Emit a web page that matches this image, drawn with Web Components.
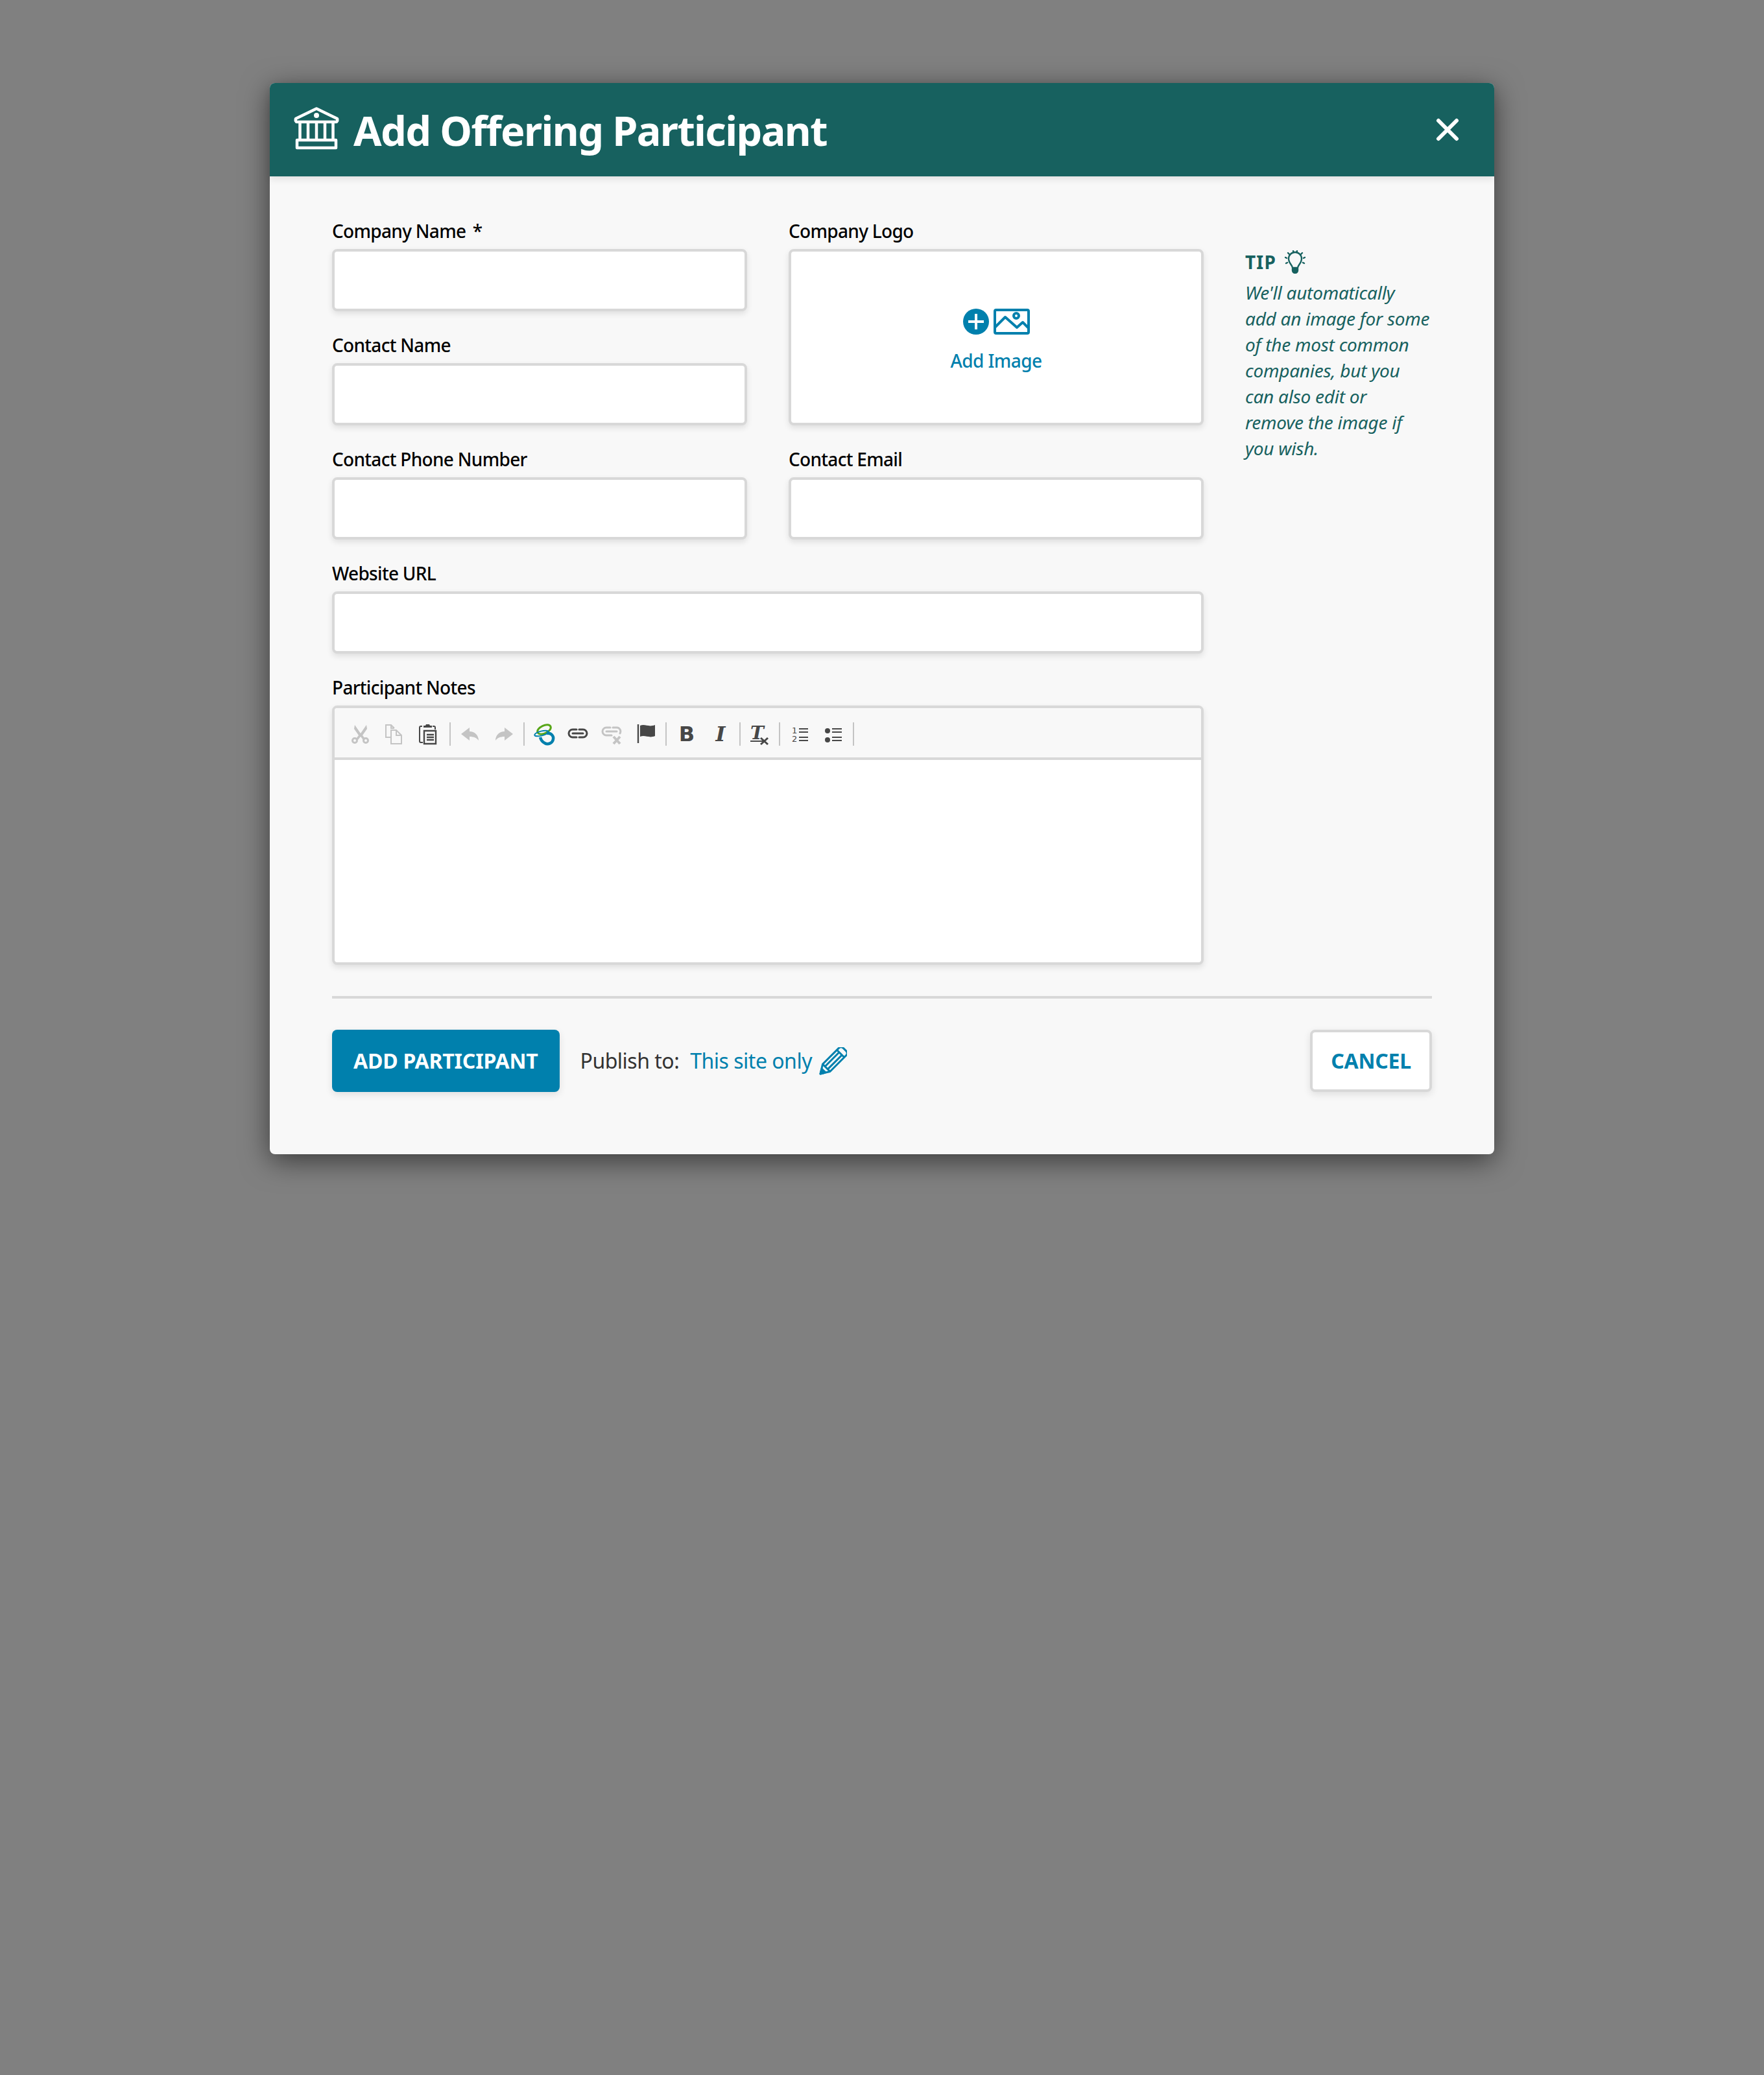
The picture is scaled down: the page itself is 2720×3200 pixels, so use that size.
<!DOCTYPE html>
<html lang="en">
<head>
<meta charset="utf-8">
<title>Add Offering Participant</title>
<style>
    html, body { margin: 0; padding: 0; }
    body {
        background: #808080;
        min-height: 3200px;
        font-family: "Noto Sans", "Liberation Sans", sans-serif;
        padding-top: 128px;
        box-sizing: border-box;
    }
</style>
</head>
<body>

<participant-modal heading="Add Offering Participant">
    <form-grid>
        <form-field label="Company Name&nbsp;&#8201;*"><text-box></text-box></form-field>
        <form-field label="Company Logo" style="grid-row: span 2"><logo-upload></logo-upload></form-field>
        <form-field label="Contact Name"><text-box></text-box></form-field>
        <form-field label="Contact Phone Number"><text-box></text-box></form-field>
        <form-field label="Contact Email"><text-box></text-box></form-field>
        <form-field label="Website URL" style="grid-column: span 2"><text-box></text-box></form-field>
        <form-field label="Participant Notes" style="grid-column: span 2"><notes-editor></notes-editor></form-field>
    </form-grid>
    <tip-note slot="aside">We'll automatically<br>add an image for some<br>of the most common<br>companies, but you<br>can also edit or<br>remove the image if<br>you wish.</tip-note>
    <action-button slot="primary" kind="primary">ADD PARTICIPANT</action-button>
    <publish-target slot="primary"></publish-target>
    <action-button slot="secondary">CANCEL</action-button>
</participant-modal>

<script>
const FONT = `"Noto Sans", "Liberation Sans", sans-serif`

// ----------------------------------------------------------------------------
// MARK: Modal
// ----------------------------------------------------------------------------

class ParticipantModal extends HTMLElement {
    constructor() {
        super()
        this.attachShadow({ mode: 'open' })
        this.shadowRoot.innerHTML = `
            <style>
                :host {
                    display: block;
                    width: 1888px;
                    margin-left: 416px;
                    border-radius: 8px;
                    background: #f8f8f8;
                    box-shadow: 0 10px 44px rgba(0, 0, 0, 0.55);
                }
                header {
                    display: flex;
                    align-items: center;
                    height: 144px;
                    padding: 0 54px 0 37px;
                    box-sizing: border-box;
                    background: #17615f;
                    border-radius: 8px 8px 0 0;
                    box-shadow: 0 4px 12px rgba(0, 0, 0, 0.1);
                    color: #fff;
                    position: relative;
                }
                .logo { margin-top: -5px; }
                h1 {
                    flex: 1;
                    margin: 0 0 0 22px;
                    font: 700 63px/1 ${FONT};
                    letter-spacing: -1.6px;
                }
                main {
                    display: grid;
                    grid-template-columns: 1344px 288px;
                    column-gap: 64px;
                    padding: 64px 96px 0;
                }
                footer {
                    display: flex;
                    justify-content: space-between;
                    align-items: center;
                    margin: 48px 96px 0;
                    padding: 48px 0 96px;
                    border-top: 4px solid #d8d8d8;
                }
                .left { display: flex; align-items: center; gap: 32px; }
            </style>
            <header>
                <svg class="logo" width="70" height="66" viewBox="0 0 70 66" fill="none" stroke="#fff" stroke-width="4.5" stroke-linejoin="round" stroke-linecap="round">
                    <path d="M35 2.5 L67 18 Q68 23 65 23 H5 Q2 23 3 18 Z"/>
                    <circle cx="35" cy="13" r="4" fill="#fff" stroke="none"/>
                    <path d="M9.5 25 V50 M22 25 V50 M35 25 V50 M48 25 V50 M60.5 25 V50"/>
                    <rect x="5" y="51" width="60" height="12"/>
                </svg>
                <h1>${this.getAttribute('heading')}</h1>
                <svg width="36" height="36" viewBox="0 0 36 36" stroke="#fff" stroke-width="6" stroke-linecap="round">
                    <path d="M4 4 L32 32 M32 4 L4 32"/>
                </svg>
            </header>
            <main>
                <slot></slot>
                <slot name="aside"></slot>
            </main>
            <footer>
                <div class="left"><slot name="primary"></slot></div>
                <slot name="secondary"></slot>
            </footer>
        `
    }
}

customElements.define('participant-modal', ParticipantModal)

// ----------------------------------------------------------------------------
// MARK: Form
// ----------------------------------------------------------------------------

class FormGrid extends HTMLElement {
    constructor() {
        super()
        this.attachShadow({ mode: 'open' })
        this.shadowRoot.innerHTML = `
            <style>
                :host {
                    display: grid;
                    grid-template-columns: 640px 640px;
                    column-gap: 64px;
                    row-gap: 32px;
                }
            </style>
            <slot></slot>
        `
    }
}

customElements.define('form-grid', FormGrid)

class FormField extends HTMLElement {
    constructor() {
        super()
        this.attachShadow({ mode: 'open' })
        this.shadowRoot.innerHTML = `
            <style>
                :host {
                    display: flex;
                    flex-direction: column;
                    min-width: 0;
                }
                label {
                    display: block;
                    height: 48px;
                    font: 500 28px/40px ${FONT};
                    color: #000;
                    letter-spacing: -0.7px;
                    white-space: nowrap;
                }
                .control { flex: 1; display: flex; flex-direction: column; }
            </style>
            <label>${this.getAttribute('label')}</label>
            <div class="control"><slot></slot></div>
        `
    }
}

customElements.define('form-field', FormField)

const boxStyles = `
    background: #fff;
    border: 4px solid #d8d8d8;
    border-radius: 8px;
    box-sizing: border-box;
    box-shadow: 0 4px 10px rgba(0, 0, 0, 0.1);
`

class TextBox extends HTMLElement {
    constructor() {
        super()
        this.attachShadow({ mode: 'open' })
        this.shadowRoot.innerHTML = `
            <style>
                :host { display: block; height: 96px; ${boxStyles} }
            </style>
        `
    }
}

customElements.define('text-box', TextBox)

class LogoUpload extends HTMLElement {
    constructor() {
        super()
        this.attachShadow({ mode: 'open' })
        this.shadowRoot.innerHTML = `
            <style>
                :host {
                    flex: 1;
                    display: flex;
                    flex-direction: column;
                    align-items: center;
                    padding-top: 84px;
                    color: #0080ad;
                    font: 500 28px/40px ${FONT};
                    letter-spacing: -0.6px;
                    ${boxStyles}
                }
                .icons { display: flex; align-items: center; gap: 6px; height: 48px; margin-bottom: 16px; }
            </style>
            <div class="icons">
                <svg width="42" height="42" viewBox="0 0 42 42">
                    <circle cx="21" cy="21" r="20" fill="#0080ad"/>
                    <path d="M21 9 V33 M9 21 H33" stroke="#fff" stroke-width="4"/>
                </svg>
                <svg width="56" height="40" viewBox="0 0 56 40" fill="none" stroke="#0080ad" stroke-width="4" stroke-linejoin="round">
                    <rect x="2" y="2" width="52" height="36" rx="2"/>
                    <circle cx="35" cy="11" r="4"/>
                    <path d="M2 29 L18 13 L36 29 L45 21 L54 30"/>
                </svg>
            </div>
            <div>Add Image</div>
        `
    }
}

customElements.define('logo-upload', LogoUpload)

// ----------------------------------------------------------------------------
// MARK: Tip
// ----------------------------------------------------------------------------

class TipNote extends HTMLElement {
    constructor() {
        super()
        this.attachShadow({ mode: 'open' })
        this.shadowRoot.innerHTML = `
            <style>
                :host {
                    display: block;
                    padding-top: 43px;
                    color: #17615f;
                    font: italic 400 28px/40px ${FONT};
                    letter-spacing: -0.25px;
                    white-space: nowrap;
                }
                .title {
                    display: flex;
                    align-items: center;
                    gap: 13px;
                    height: 50px;
                    margin-bottom: 2px;
                    font: 700 28px/40px ${FONT};
                    letter-spacing: 1.2px;
                }
                p { margin: 0; }
            </style>
            <div class="title">
                <span>TIP</span>
                <svg width="32" height="36" viewBox="0 0 32 36" fill="none" stroke="#17615f" stroke-width="2.4" stroke-linecap="round" stroke-linejoin="round">
                    <path d="M12 27 C12 23 6 20 6 13 A10 10 0 0 1 26 13 C26 20 20 23 20 27 Z"/>
                    <path d="M12 28 H20 V31 A4 4 0 0 1 12 31 Z" fill="#17615f"/>
                    <path d="M13 1 L14 3 M19 1 L18 3 M5 4 L7 6 M27 4 L25 6 M1 11 L3 12 M31 11 L29 12 M2 20 L4 19 M30 20 L28 19"/>
                </svg>
            </div>
            <p><slot></slot></p>
        `
    }
}

customElements.define('tip-note', TipNote)

// ----------------------------------------------------------------------------
// MARK: Editor
// ----------------------------------------------------------------------------

const ON = '#474747'
const OFF = '#c4c4c4'

const toolIcons = {
    cut: `<g fill="none" stroke="${OFF}" stroke-width="3"><circle cx="7" cy="26" r="3.5"/><circle cx="24" cy="26" r="3.5"/></g>
          <path d="M7 2 L16 15 L25 2 L26 8 L19 18 L23 23 L20 25 L16 20 L12 25 L9 23 L13 18 L6 8 Z" fill="${OFF}"/>`,
    copy: `<path d="M10 21 H3 V2 H11 L16 7 M11 2 V7 H16 M11 10 H19 L27 18 V31 H11 Z M19 10 V18 H27" fill="none" stroke="${OFF}" stroke-width="2"/>`,
    paste: `<path d="M7 4 H5 Q3 4 3 6 V27 Q3 29 5 29 H8 M23 4 H25 Q27 4 27 6 V9" fill="none" stroke="${ON}" stroke-width="2"/>
            <path d="M9 6 V3 H12 L13 1 H18 L19 3 H22 V6 Z" fill="${ON}"/>
            <path d="M10 11 H28 V31 H10 Z" fill="none" stroke="${ON}" stroke-width="2.4"/>
            <path d="M14 17 H25 M14 21 H25 M14 25 H25" stroke="${ON}" stroke-width="2.4"/>`,
    undo: `<path d="M15 6 V12 C23 12 29 18 29 26 C26 22 22 20 15 20 V26 L2 16 Z" fill="${OFF}"/>`,
    redo: `<path d="M17 6 V12 C9 12 3 18 3 26 C6 22 10 20 17 20 V26 L30 16 Z" fill="${OFF}"/>`,
    brand: `<g fill="none">
                <ellipse cx="16" cy="9" rx="11" ry="6" transform="rotate(-25 16 9)" stroke="#58a618" stroke-width="3"/>
                <path d="M20 15 C27 14 31 19 30 24 C29 30 22 33 17 30 C13 28 11 25 10 21" stroke="#0080ad" stroke-width="4.5"/>
                <ellipse cx="12" cy="15" rx="11" ry="3.5" transform="rotate(-14 12 15)" stroke="#0080ad" stroke-width="2"/>
            </g>`,
    link: `<g fill="none" stroke="${ON}" stroke-width="3" stroke-linecap="round">
               <path d="M14 9 H8 A6 6 0 0 0 8 21 H14 M18 9 H24 A6 6 0 0 1 24 21 H18"/>
               <path d="M8 15 H24"/>
           </g>`,
    unlink: `<g fill="none" stroke="${OFF}" stroke-width="3" stroke-linecap="round">
                 <path d="M14 6 H8 A6 6 0 0 0 8 18 H16 M18 6 H24 A6 6 0 0 1 29 15"/>
                 <path d="M8 12 H24"/>
             </g>
             <path d="M19 20 L29 31 M29 20 L19 31" stroke="${OFF}" stroke-width="4"/>`,
    flag: `<path d="M5 1 V30" stroke="${ON}" stroke-width="2.4"/>
           <path d="M8 3 C16 0 21 6 31 2 V19 C22 23 16 17 8 20 Z" fill="${ON}"/>`,
    ol: `<path d="M15 8 H29 M15 13 H29 M15 21 H29 M15 26 H29" stroke="${ON}" stroke-width="2"/>
         <text x="4" y="15" font-family="DejaVu Sans, sans-serif" font-size="13" fill="${ON}">1</text>
         <text x="4" y="28" font-family="DejaVu Sans, sans-serif" font-size="13" fill="${ON}">2</text>`,
    ul: `<circle cx="7" cy="11" r="4" fill="${ON}"/><circle cx="7" cy="25" r="4" fill="${ON}"/>
         <path d="M14 8 H29 M14 13 H29 M14 21 H29 M14 26 H29" stroke="${ON}" stroke-width="2"/>`,
    clear: `<path d="M2 27 H22" stroke="${ON}" stroke-width="2"/>
            <path d="M18 22 L29 32 M29 22 L18 32" stroke="${ON}" stroke-width="3"/>`,
}

class ToolButton extends HTMLElement {
    constructor() {
        super()
        this.attachShadow({ mode: 'open' })
        const name = this.getAttribute('icon')
        this.shadowRoot.innerHTML = `
            <style>
                :host {
                    display: flex;
                    align-items: center;
                    justify-content: center;
                    position: relative;
                    width: 52px;
                    height: 32px;
                    color: ${ON};
                }
                span {
                    font-size: 32px;
                    line-height: 32px;
                }
                .b { font-family: "DejaVu Sans", sans-serif; font-weight: 700; }
                .i { font-family: "DejaVu Serif", serif; font-weight: 700; font-style: italic; }
                .tx { position: absolute; left: 12px; top: -1px; font-size: 28px; font-family: "DejaVu Serif", serif; font-weight: 700; font-style: italic; }
                svg { display: block; }
            </style>
            ${name === 'bold' ? '<span class="b">B</span>' : ''}
            ${name === 'italic' ? '<span class="i">I</span>' : ''}
            ${name === 'clear' ? '<span class="tx">T</span>' : ''}
            ${toolIcons[name] ? `<svg width="32" height="32" viewBox="0 0 32 32" overflow="visible">${toolIcons[name]}</svg>` : ''}
        `
    }
}

customElements.define('tool-button', ToolButton)

class ToolSep extends HTMLElement {
    constructor() {
        super()
        this.attachShadow({ mode: 'open' })
        this.shadowRoot.innerHTML = `
            <style>
                :host {
                    display: block;
                    width: 2px;
                    height: 36px;
                    margin: 0 4px;
                    background: #c4c4c4;
                }
            </style>
        `
    }
}

customElements.define('tool-sep', ToolSep)

class NotesEditor extends HTMLElement {
    constructor() {
        super()
        this.attachShadow({ mode: 'open' })
        this.shadowRoot.innerHTML = `
            <style>
                :host {
                    display: flex;
                    flex-direction: column;
                    height: 400px;
                    ${boxStyles}
                }
                .toolbar {
                    display: flex;
                    align-items: center;
                    height: 72px;
                    padding: 4px 0 0 14px;
                    background: #f8f8f8;
                    border-radius: 4px 4px 0 0;
                    border-bottom: 4px solid #d8d8d8;
                    flex: none;
                }
            </style>
            <div class="toolbar">
                <tool-button icon="cut"></tool-button>
                <tool-button icon="copy"></tool-button>
                <tool-button icon="paste"></tool-button>
                <tool-sep style="margin-left: 7px"></tool-sep>
                <tool-button icon="undo"></tool-button>
                <tool-button icon="redo"></tool-button>
                <tool-sep></tool-sep>
                <tool-button icon="brand"></tool-button>
                <tool-button icon="link"></tool-button>
                <tool-button icon="unlink"></tool-button>
                <tool-button icon="flag"></tool-button>
                <tool-sep style="margin: 0 5px"></tool-sep>
                <tool-button icon="bold"></tool-button>
                <tool-button icon="italic"></tool-button>
                <tool-sep style="margin: 0 3px"></tool-sep>
                <tool-button icon="clear"></tool-button>
                <tool-sep></tool-sep>
                <tool-button icon="ol"></tool-button>
                <tool-button icon="ul"></tool-button>
                <tool-sep></tool-sep>
            </div>
        `
    }
}

customElements.define('notes-editor', NotesEditor)

// ----------------------------------------------------------------------------
// MARK: Footer
// ----------------------------------------------------------------------------

class ActionButton extends HTMLElement {
    constructor() {
        super()
        this.attachShadow({ mode: 'open' })
        const primary = this.getAttribute('kind') === 'primary'
        this.shadowRoot.innerHTML = `
            <style>
                :host {
                    display: flex;
                    align-items: center;
                    justify-content: center;
                    height: 96px;
                    box-sizing: border-box;
                    padding: 0 ${primary ? 33 : 28}px;
                    border-radius: 8px;
                    font: 700 32px/1 ${FONT};
                    letter-spacing: -0.2px;
                    background: ${primary ? '#0080ad' : '#fff'};
                    color: ${primary ? '#fff' : '#0080ad'};
                    border: ${primary ? 'none' : '4px solid #d8d8d8'};
                    box-shadow: 0 4px 12px rgba(0, 0, 0, 0.1);
                }
            </style>
            <slot></slot>
        `
    }
}

customElements.define('action-button', ActionButton)

class PublishTarget extends HTMLElement {
    constructor() {
        super()
        this.attachShadow({ mode: 'open' })
        this.shadowRoot.innerHTML = `
            <style>
                :host {
                    display: flex;
                    align-items: center;
                    font: 400 32px/40px ${FONT};
                    letter-spacing: -0.5px;
                    color: #333;
                }
                a { color: #0080ad; margin: 0 10px 0 17px; }
                svg { margin-top: 2px; }
            </style>
            <span>Publish to:</span>
            <a>This site only</a>
            <svg width="44" height="44" viewBox="0 0 44 44" fill="none" stroke="#0080ad" stroke-width="3" stroke-linejoin="round">
                <g transform="translate(3 41) rotate(-45)">
                    <path d="M0 0 L13 -8 H48 Q53 -8 53 -3 V3 Q53 8 48 8 H13 Z"/>
                    <path d="M13 -3 H44 M13 3 H44 M44 -8 V8 M13 -8 V8"/>
                    <path d="M0 0 L7 -4 V4 Z" fill="#0080ad"/>
                </g>
            </svg>
        `
    }
}

customElements.define('publish-target', PublishTarget)
</script>
</body>
</html>
